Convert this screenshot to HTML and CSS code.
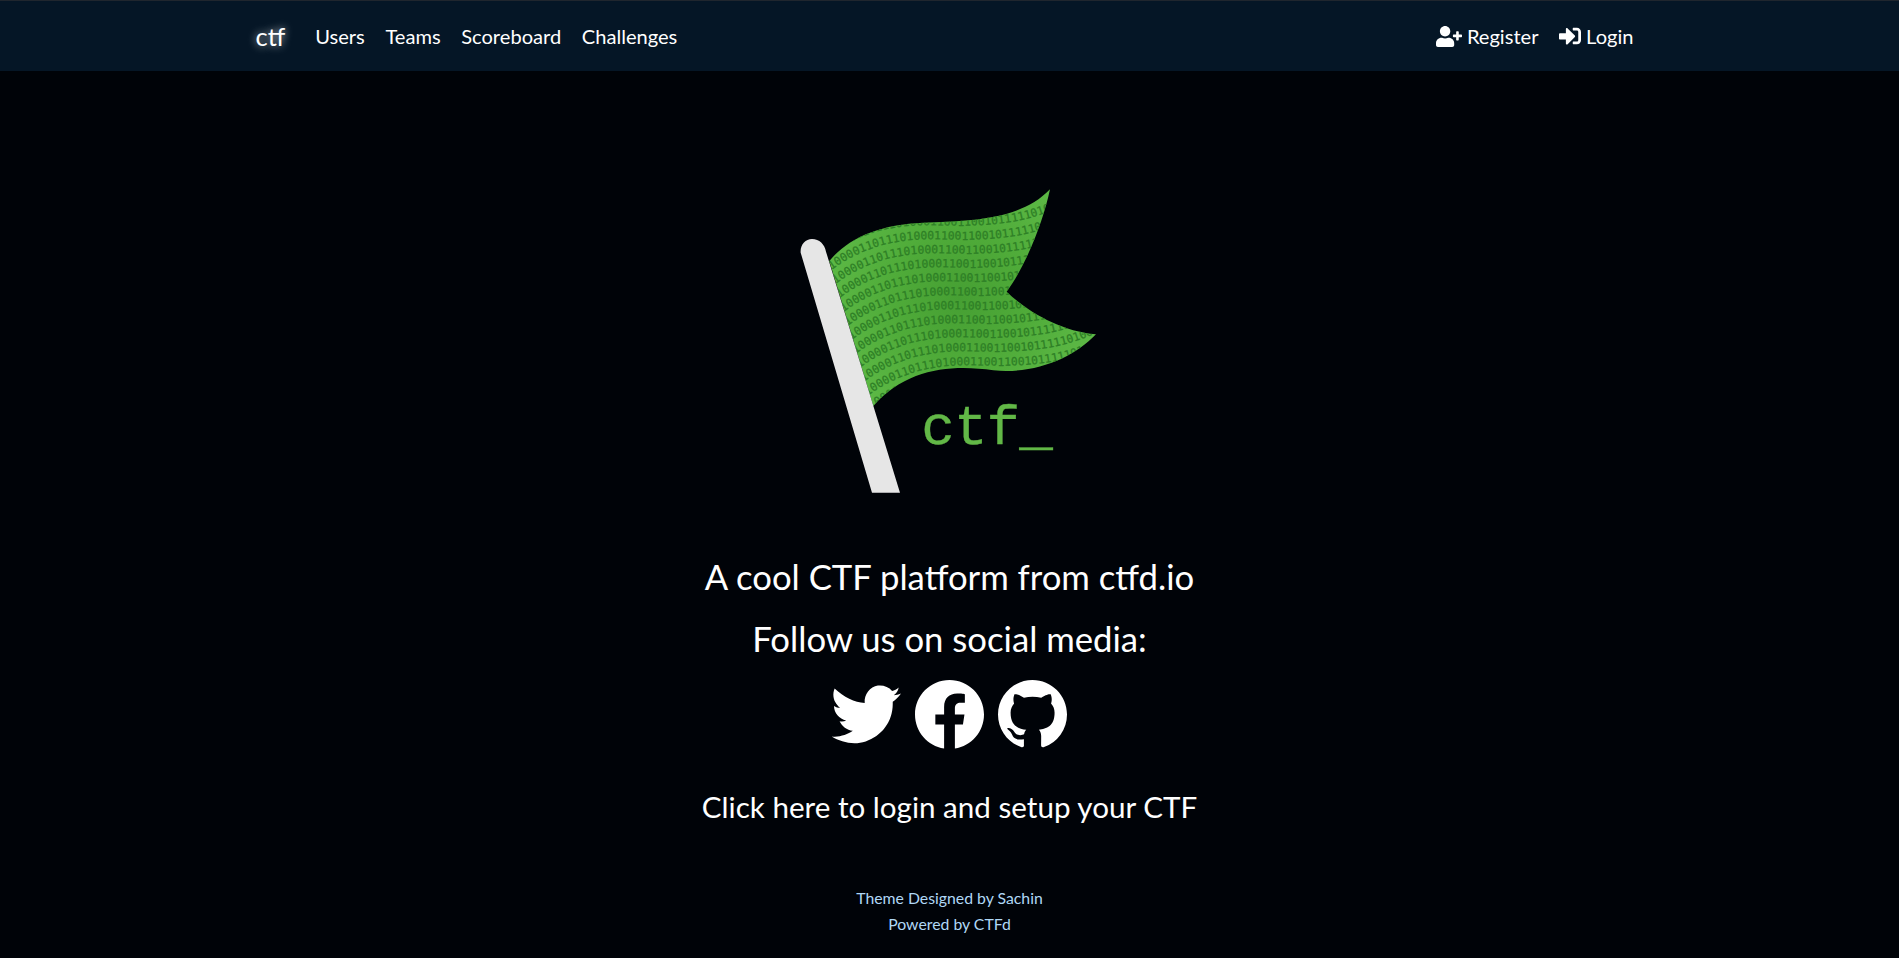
FILE: index.html
```html
<!DOCTYPE html>
<html lang="en">
<head>
<meta charset="utf-8">
<title>ctf</title>
<link rel="stylesheet" href="styles.css">
</head>
<body>
<nav class="navbar">
  <div class="nav-inner">
    <a class="brand">ctf</a>
    <ul class="nav-list">
      <li><a>Users</a></li>
      <li><a>Teams</a></li>
      <li><a>Scoreboard</a></li>
      <li><a>Challenges</a></li>
    </ul>
    <ul class="nav-list nav-right">
      <li><a><svg class="ico ico-user" viewBox="0 0 640 512"><path d="M624 208h-64v-64c0-8.8-7.2-16-16-16h-32c-8.8 0-16 7.2-16 16v64h-64c-8.8 0-16 7.2-16 16v32c0 8.8 7.2 16 16 16h64v64c0 8.8 7.2 16 16 16h32c8.8 0 16-7.2 16-16v-64h64c8.8 0 16-7.2 16-16v-32c0-8.8-7.2-16-16-16zm-400 48c70.7 0 128-57.3 128-128S294.7 0 224 0 96 57.3 96 128s57.3 128 128 128zm89.6 32h-16.7c-22.2 10.2-46.9 16-72.9 16s-50.6-5.8-72.9-16h-16.7C60.2 288 0 348.2 0 422.4V464c0 26.5 21.5 48 48 48h352c26.5 0 48-21.5 48-48v-41.6c0-74.2-60.2-134.4-134.4-134.4z"/></svg> Register</a></li>
      <li><a><svg class="ico ico-login" viewBox="0 0 512 512"><path d="M416 448h-84c-6.6 0-12-5.4-12-12v-40c0-6.6 5.4-12 12-12h84c17.7 0 32-14.3 32-32V160c0-17.7-14.3-32-32-32h-84c-6.6 0-12-5.4-12-12V76c0-6.6 5.4-12 12-12h84c53 0 96 43 96 96v192c0 53-43 96-96 96zm-47-201L201 79c-15-15-41-4.5-41 17v96H24c-13.3 0-24 10.7-24 24v96c0 13.3 10.7 24 24 24h136v96c0 21.5 26 32 41 17l168-168c9.3-9.4 9.3-24.6 0-34z"/></svg> Login</a></li>
    </ul>
  </div>
</nav>
<main class="main">
  <svg class="logo" viewBox="0 0 1020 990" aria-label="ctf logo">
    <defs>
      <clipPath id="flagClip"><path d="M148 270C205 200 300 160 430 155C560 150 720 150 810 55C790 150 740 280 680 362C740 420 840 480 948 490C880 560 770 610 640 598C520 580 380 590 280 705Z"/></clipPath>
      <radialGradient id="flagShade" gradientUnits="userSpaceOnUse" cx="540" cy="380" r="400">
        <stop offset="0" stop-color="#469f33"/>
        <stop offset="0.5" stop-color="#4fab39"/>
        <stop offset="1" stop-color="#5cb845"/>
      </radialGradient>
      <path id="row" d="M100 345C190 255 300 205 450 205C600 205 760 225 960 90"/>
    </defs>
    <path d="M148 270C205 200 300 160 430 155C560 150 720 150 810 55C790 150 740 280 680 362C740 420 840 480 948 490C880 560 770 610 640 598C520 580 380 590 280 705Z" fill="url(#flagShade)"/>
    <g clip-path="url(#flagClip)" class="bits">
      <text transform="translate(-12,-42)"><textPath href="#row" startOffset="52">0100001101110100011001100101111101000011011</textPath></text>
      <text transform="translate(0,0)"><textPath href="#row" startOffset="52">0100001101110100011001100101111101000011011</textPath></text>
      <text transform="translate(12,42)"><textPath href="#row" startOffset="52">0100001101110100011001100101111101000011011</textPath></text>
      <text transform="translate(24,84)"><textPath href="#row" startOffset="52">0100001101110100011001100101111101000011011</textPath></text>
      <text transform="translate(36,126)"><textPath href="#row" startOffset="52">0100001101110100011001100101111101000011011</textPath></text>
      <text transform="translate(48,168)"><textPath href="#row" startOffset="52">0100001101110100011001100101111101000011011</textPath></text>
      <text transform="translate(60,210)"><textPath href="#row" startOffset="52">0100001101110100011001100101111101000011011</textPath></text>
      <text transform="translate(72,252)"><textPath href="#row" startOffset="52">0100001101110100011001100101111101000011011</textPath></text>
      <text transform="translate(84,294)"><textPath href="#row" startOffset="52">0100001101110100011001100101111101000011011</textPath></text>
      <text transform="translate(96,336)"><textPath href="#row" startOffset="52">0100001101110100011001100101111101000011011</textPath></text>
      <text transform="translate(108,378)"><textPath href="#row" startOffset="52">0100001101110100011001100101111101000011011</textPath></text>
      <text transform="translate(120,420)"><textPath href="#row" startOffset="52">0100001101110100011001100101111101000011011</textPath></text>
    </g>
    <path d="M62 245C60 222 76 204 96 204C118 204 134 220 138 242L360 965H276Z" fill="#e6e6e6"/>
    <text x="424" y="820" class="logo-word">ctf_</text>
  </svg>
  <h2 class="line line-first">A cool CTF platform from ctfd.io</h2>
  <h2 class="line line-second">Follow us on social media:</h2>
  <div class="socials">
    <svg class="social" viewBox="23 12 209 209"><path d="M225 35C219 40 212 44 205 45C195 33 178 27 162 29C138 33 120 55 122 82C92 80 58 64 31 38C24 54 27 72 36 84C40 90 44 94 48 97C42 97 34 95 29 91C29 112 45 130 66 135C60 138 52 138 46 137C53 152 68 164 86 166C70 178 44 186 22 183C50 200 88 210 125 198C172 183 207 140 207 85C207 84 207 80 207 78C215 73 225 63 232 53C224 57 217 58 210 58C218 54 223 45 225 35Z"/></svg>
    <svg class="social" viewBox="8 8 496 496"><path d="M504 256C504 119 393 8 256 8S8 119 8 256c0 123.78 90.69 226.38 209.25 245V327.69h-63V256h63v-54.64c0-62.15 37-96.48 93.67-96.48 27.14 0 55.52 4.84 55.52 4.84v61h-31.28c-30.8 0-40.41 19.12-40.41 38.73V256h68.78l-11 71.69h-57.78V501C413.31 482.38 504 379.78 504 256z"/></svg>
    <svg class="social" viewBox="0 0 16 16"><path d="M8 0C3.58 0 0 3.58 0 8c0 3.54 2.29 6.53 5.47 7.59.4.07.55-.17.55-.38 0-.19-.01-.82-.01-1.49-2.01.37-2.53-.49-2.69-.94-.09-.23-.48-.94-.82-1.13-.28-.15-.68-.52-.01-.53.63-.01 1.08.58 1.23.82.72 1.21 1.87.87 2.33.66.07-.52.28-.87.51-1.07-1.78-.2-3.64-.89-3.64-3.95 0-.87.31-1.59.82-2.15-.08-.2-.36-1.02.08-2.12 0 0 .67-.21 2.2.82.64-.18 1.32-.27 2-.27.68 0 1.36.09 2 .27 1.53-1.04 2.2-.82 2.2-.82.44 1.1.16 1.92.08 2.12.51.56.82 1.27.82 2.15 0 3.07-1.87 3.75-3.65 3.95.29.25.54.73.54 1.48 0 1.07-.01 1.93-.01 2.2 0 .21.15.46.55.38A8.013 8.013 0 0016 8c0-4.42-3.58-8-8-8z"/></svg>
  </div>
  <h4 class="line line-login">Click here to login and setup your CTF</h4>
</main>
<footer class="footer">
  <div>Theme Designed by Sachin</div>
  <div>Powered by CTFd</div>
</footer>
</body>
</html>
```
FILE: styles.css
```css
* { box-sizing: border-box; }
html, body { margin: 0; height: 100%; }
body {
  background: #000308;
  color: #fff;
  font-family: Lato, "Open Sans", sans-serif;
  display: flex;
  flex-direction: column;
  min-height: 958px;
  overflow: hidden;
}
.navbar {
  height: 71px;
  flex: none;
  background: #051626;
  border-top: 1px solid #20262e;
}
.nav-inner {
  width: 1410px;
  margin: 0 auto;
  height: 100%;
  display: flex;
  align-items: center;
  padding: 0 21px 0 11px;
}
.brand {
  font-size: 25.5px;
  margin-right: 30px;
  text-shadow: 0 0 8px rgba(255, 255, 255, 0.75);
}
.nav-list {
  list-style: none;
  margin: 0;
  padding: 0;
  display: flex;
  gap: 20.6px;
  font-size: 20.1px;
}
.nav-right { margin-left: auto; }
.nav-list a { display: flex; align-items: center; gap: 5px; }
.ico { fill: #fff; display: block; }
.ico-user { width: 26px; height: 21px; }
.ico-login { width: 22px; height: 22px; }
.main {
  display: flex;
  flex-direction: column;
  align-items: center;
  padding-top: 100px;
}
.logo { width: 340px; height: 330px; display: block; overflow: visible; }
.bits text {
  font-family: "DejaVu Sans Mono", monospace;
  font-size: 34px;
  fill: #2e7f26;
  stroke: #2e7f26;
  stroke-width: 0.8px;
}
.logo-word {
  font-family: "Liberation Mono", monospace;
  font-size: 168px;
  letter-spacing: -3px;
  fill: #62b847;
  stroke: #62b847;
  stroke-width: 1px;
}
.line { margin: 0; font-weight: 400; text-align: center; }
.line-first { font-size: 34.7px; line-height: 42px; margin-top: 55px; }
.line-second { font-size: 34.7px; line-height: 42px; margin-top: 20px; }
.line-login { font-size: 29.6px; line-height: 36px; margin-top: 40px; }
.socials { display: flex; gap: 14px; margin-top: 20px; align-items: center; }
.social { fill: #fff; width: 69px; height: 69px; display: block; overflow: visible; }
.footer {
  margin-top: auto;
  padding-bottom: 21px;
  text-align: center;
  color: #b0d8f6;
  font-size: 15.8px;
  line-height: 26px;
}
```
